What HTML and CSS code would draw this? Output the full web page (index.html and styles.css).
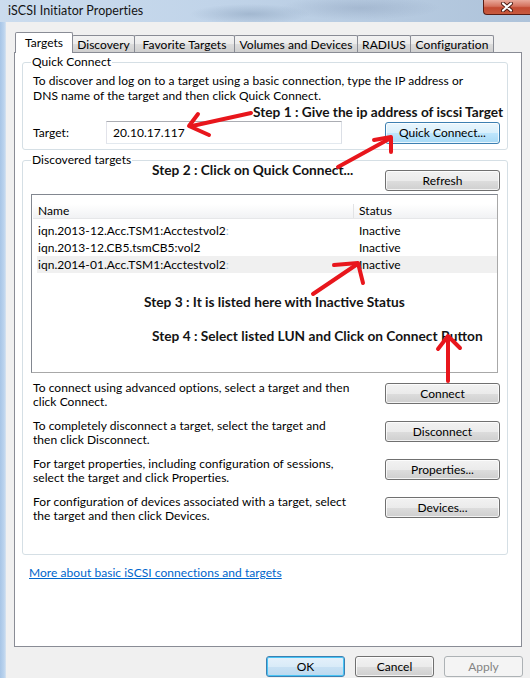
FILE: index.html
```html
<!DOCTYPE html>
<html lang="en">
<head>
<meta charset="utf-8">
<title>iSCSI Initiator Properties</title>
<link rel="stylesheet" href="styles.css">
</head>
<body>
<div class="window">
  <div class="titlebar">
    <span class="title">iSCSI Initiator Properties</span>
    <div class="close">
      <svg width="14" height="10" viewBox="0 0 14 10"><path d="M3 1.5 L11 8.5 M11 1.5 L3 8.5" stroke="#4a1a12" stroke-width="4" stroke-linecap="round"/><path d="M3 1.5 L11 8.5 M11 1.5 L3 8.5" stroke="#fff" stroke-width="2.2" stroke-linecap="round"/></svg>
    </div>
  </div>
  <div class="frame">
    <div class="edge"></div>
    <div class="client">
      <div class="tabs">
        <div class="tab active">Targets</div>
        <div class="tab">Discovery</div>
        <div class="tab">Favorite Targets</div>
        <div class="tab">Volumes and Devices</div>
        <div class="tab">RADIUS</div>
        <div class="tab">Configuration</div>
      </div>
      <div class="panel">
        <fieldset class="group qc">
          <legend>Quick Connect</legend>
          <p class="intro">To discover and log on to a target using a basic connection, type the IP address or<br>DNS name of the target and then click Quick Connect.</p>
          <div class="step step1">Step 1 : Give the ip address of iscsi Target</div>
          <div class="target-row">
            <label class="target-label">Target:</label>
            <div class="input">20.10.17.117</div>
            <button class="btn hot">Quick Connect...</button>
          </div>
        </fieldset>
        <fieldset class="group dt">
          <legend>Discovered targets</legend>
          <div class="refresh-row">
            <span class="step step2">Step 2 : Click on Quick Connect...</span>
            <button class="btn">Refresh</button>
          </div>
          <div class="list">
            <div class="list-head"><span>Name</span><span>Status</span></div>
            <div class="rows">
              <div class="row"><span>iqn.2013-12.Acc.TSM1:Acctestvol2<i class="dim">:</i></span><span>Inactive</span></div>
              <div class="row"><span>iqn.2013-12.CB5.tsmCB5:vol2</span><span>Inactive</span></div>
              <div class="row sel"><span>iqn.2014-01.Acc.TSM1:Acctestvol2<i class="dim">:</i></span><span>Inactive</span></div>
            </div>
            <div class="step step3">Step 3 : It is listed here with Inactive Status</div>
            <div class="step step4">Step 4 : Select listed LUN and Click on Connect Button</div>
          </div>
          <div class="actions">
            <div class="action">
              <p>To connect using advanced options, select a target and then<br>click Connect.</p>
              <button class="btn">Connect</button>
            </div>
            <div class="action">
              <p>To completely disconnect a target, select the target and<br>then click Disconnect.</p>
              <button class="btn">Disconnect</button>
            </div>
            <div class="action">
              <p>For target properties, including configuration of sessions,<br>select the target and click Properties.</p>
              <button class="btn">Properties...</button>
            </div>
            <div class="action">
              <p>For configuration of devices associated with a target, select<br>the target and then click Devices.</p>
              <button class="btn">Devices...</button>
            </div>
          </div>
        </fieldset>
        <a class="more" href="#">More about basic iSCSI connections and targets</a>
      </div>
      <div class="footer">
        <button class="btn default">OK</button>
        <button class="btn">Cancel</button>
        <button class="btn" disabled>Apply</button>
      </div>
    </div>
  </div>
  <svg class="annot" width="530" height="678" viewBox="0 0 530 678">
    <g fill="none" stroke="#e8161c" stroke-width="4" stroke-linecap="round" stroke-linejoin="round">
      <path d="M251 113 L192 126"/>
      <path d="M198 114 L189 126 L209 135"/>
      <path d="M338 167 L389 139"/>
      <path d="M374 140 L391 137 L391 152"/>
      <path d="M313 294 L356 265"/>
      <path d="M334 265 L358 263 L363 283"/>
      <path d="M448 381 L448 337"/>
      <path d="M438 349 L448 336 L460 348"/>
    </g>
  </svg>
</div>
</body>
</html>
```

FILE: styles.css
```css
* { box-sizing: border-box; }
html, body { margin: 0; padding: 0; }
body {
  width: 530px;
  height: 678px;
  overflow: hidden;
  background: #f0f0f0;
  font-family: Lato, "Liberation Sans", sans-serif;
  font-size: 12px;
  letter-spacing: 0.05px;
  color: #000;
}

.window {
  position: relative;
  width: 530px;
  height: 678px;
  display: flex;
  flex-direction: column;
}

.titlebar {
  height: 22px;
  flex: none;
  display: flex;
  justify-content: space-between;
  align-items: flex-start;
  padding-left: 8px;
  background:
    radial-gradient(ellipse 60px 10px at 250px 14px, rgba(110,135,165,.35), transparent),
    radial-gradient(ellipse 80px 12px at 360px 8px, rgba(120,140,170,.30), transparent),
    linear-gradient(to right, #cbdcee 0%, #c1d4e9 40%, #b6cae0 75%, #aec3da 100%);
}
.title {
  font-size: 12.5px;
  line-height: 22px;
  color: #141414;
}
.close {
  width: 47px;
  height: 15px;
  border: 1px solid #5a1d14;
  border-top: none;
  border-right: none;
  border-radius: 0 0 0 4px;
  background: linear-gradient(#e9a99b 0%, #d4715d 45%, #c34a32 55%, #c85a3e 100%);
  display: flex;
  align-items: center;
  justify-content: center;
}

.frame {
  flex: 1;
  display: flex;
  min-height: 0;
}
.edge {
  flex: none;
  width: 6px;
  background: linear-gradient(to right, #a7c5e6, #bcd4ee 70%, #d8e4f0);
}
.client {
  flex: 1;
  min-width: 0;
  padding-left: 8px;
  display: flex;
  flex-direction: column;
}

.tabs {
  display: flex;
  align-items: flex-end;
  height: 31px;
  margin-bottom: -1px;
  padding-left: 1px;
}
.tab {
  flex: none;
  height: 17px;
  margin-bottom: 1px;
  margin-left: -1px;
  border: 1px solid #898c95;
  border-bottom: none;
  border-radius: 2px 2px 0 0;
  background: linear-gradient(#f3f3f3, #ebebeb 50%, #dddddd 50%, #cfcfcf);
  display: flex;
  align-items: center;
  justify-content: center;
  white-space: nowrap;
  color: #000;
}
.tab:nth-child(1) { width: 58px; margin-left: 0; }
.tab:nth-child(2) { width: 63px; }
.tab:nth-child(3) { width: 101px; }
.tab:nth-child(4) { width: 124px; }
.tab:nth-child(5) { width: 54px; }
.tab:nth-child(6) { width: 84px; }
.tab.active {
  height: 21px;
  margin-bottom: 0;
  padding-bottom: 2px;
  background: #fff;
  position: relative;
  z-index: 1;
}

.panel {
  flex: none;
  width: 508px;
  height: 595px;
  border: 1px solid #898c95;
  background: #fff;
  padding: 2px 13px 0 7px;
  overflow: hidden;
}

.group {
  margin: 0;
  min-width: 0;
  border: 1px solid #d5dfe5;
  border-radius: 3px;
  padding: 0 7px 5px 10px;
}
.group legend {
  padding: 0 1px;
  margin-left: -2px;
  line-height: 14px;
  font-size: 12px;
}

.intro {
  margin: 4px 0 0;
  line-height: 15px;
}

.step {
  font-family: Lato, "Liberation Sans", sans-serif;
  font-weight: 700;
  font-size: 13.7px;
  letter-spacing: 0;
  line-height: 17px;
  color: #141414;
  white-space: nowrap;
}
.step1 { margin-left: 220px; }

.target-row {
  display: flex;
  align-items: center;
  margin-top: 1px;
}
.target-label { width: 73px; flex: none; }
.input {
  flex: none;
  width: 236px;
  height: 23px;
  border: 1px solid;
  border-color: #abadb3 #dbdfe6 #e3e9ef #e2e3ea;
  padding-left: 6px;
  line-height: 21px;
}

.btn {
  width: 115px;
  height: 21px;
  flex: none;
  padding: 0;
  font: inherit;
  font-size: 12px;
  line-height: 19px;
  color: #000;
  border: 1px solid #707070;
  border-radius: 3px;
  background: linear-gradient(#f2f2f2, #ebebeb 50%, #dddddd 51%, #cfcfcf);
  box-shadow: inset 0 0 0 1px rgba(255,255,255,.75);
}
.btn.hot {
  border-color: #3c7fb1;
  background: linear-gradient(#eaf6fd, #d9f0fc 50%, #bee6fd 51%, #a7d9f5);
}
.target-row .btn { margin-left: auto; height: 22px; }

.dt {
  margin-top: 3px;
  padding-bottom: 31px;
}
.refresh-row {
  display: flex;
  margin-top: 3px;
}
.step2 {
  margin-left: 119px;
  margin-top: -9px;
  align-self: flex-start;
}
.refresh-row .btn { margin-left: auto; }

.list {
  height: 179px;
  margin: 3px 2px 0 -2px;
  border: 1px solid #828790;
  border-right-color: #a8a8a8;
  border-bottom-color: #a8a8a8;
  padding: 9px 0 0 0;
}
.list-head {
  display: grid;
  grid-template-columns: 320px 1fr;
  height: 15px;
  margin-left: 1px;
  line-height: 14px;
  background: linear-gradient(#ffffff, #f1f2f4);
  border-bottom: 1px solid #e6e7e9;
}
.list-head span { padding-left: 5px; }
.list-head span + span { border-left: 1px solid #e2e3e5; }

.rows {
  margin-top: 3px;
  margin-left: 5px;
}
.row {
  display: grid;
  grid-template-columns: 322px 1fr;
  height: 17px;
  line-height: 17px;
}
.row span:first-child { padding-left: 1px; }
.row.sel { background: #f0f0f0; }
.dim { color: #9cc3e5; font-style: normal; }

.step3 { margin: 20px 0 0 112px; }
.step4 { margin: 17px 0 0 120px; }

.actions {
  display: flex;
  flex-direction: column;
  gap: 10px;
  margin-top: 8px;
}
.action {
  display: flex;
  justify-content: space-between;
}
.action p {
  margin: 0;
  line-height: 14px;
}
.action .btn { margin-top: 2px; }

.more {
  display: inline-block;
  margin: 11px 0 0 7px;
  color: #0066cc;
  text-decoration: underline;
  line-height: 14px;
}

.footer {
  display: flex;
  justify-content: flex-end;
  gap: 10px;
  padding: 9px 7px 0 0;
}
.footer .btn { width: 79px; }
.btn.default {
  border-color: #3c7fb1;
  background: linear-gradient(#e5f1fb, #d9ebf8 50%, #c8e1f4 51%, #bcd9ef);
  box-shadow: inset 0 0 0 1px #48c4f5;
}
.btn:disabled {
  color: #838383;
  border-color: #adb2b5;
  background: #f4f4f4;
  box-shadow: none;
}

.annot {
  position: absolute;
  left: 0;
  top: 0;
  pointer-events: none;
}
```
